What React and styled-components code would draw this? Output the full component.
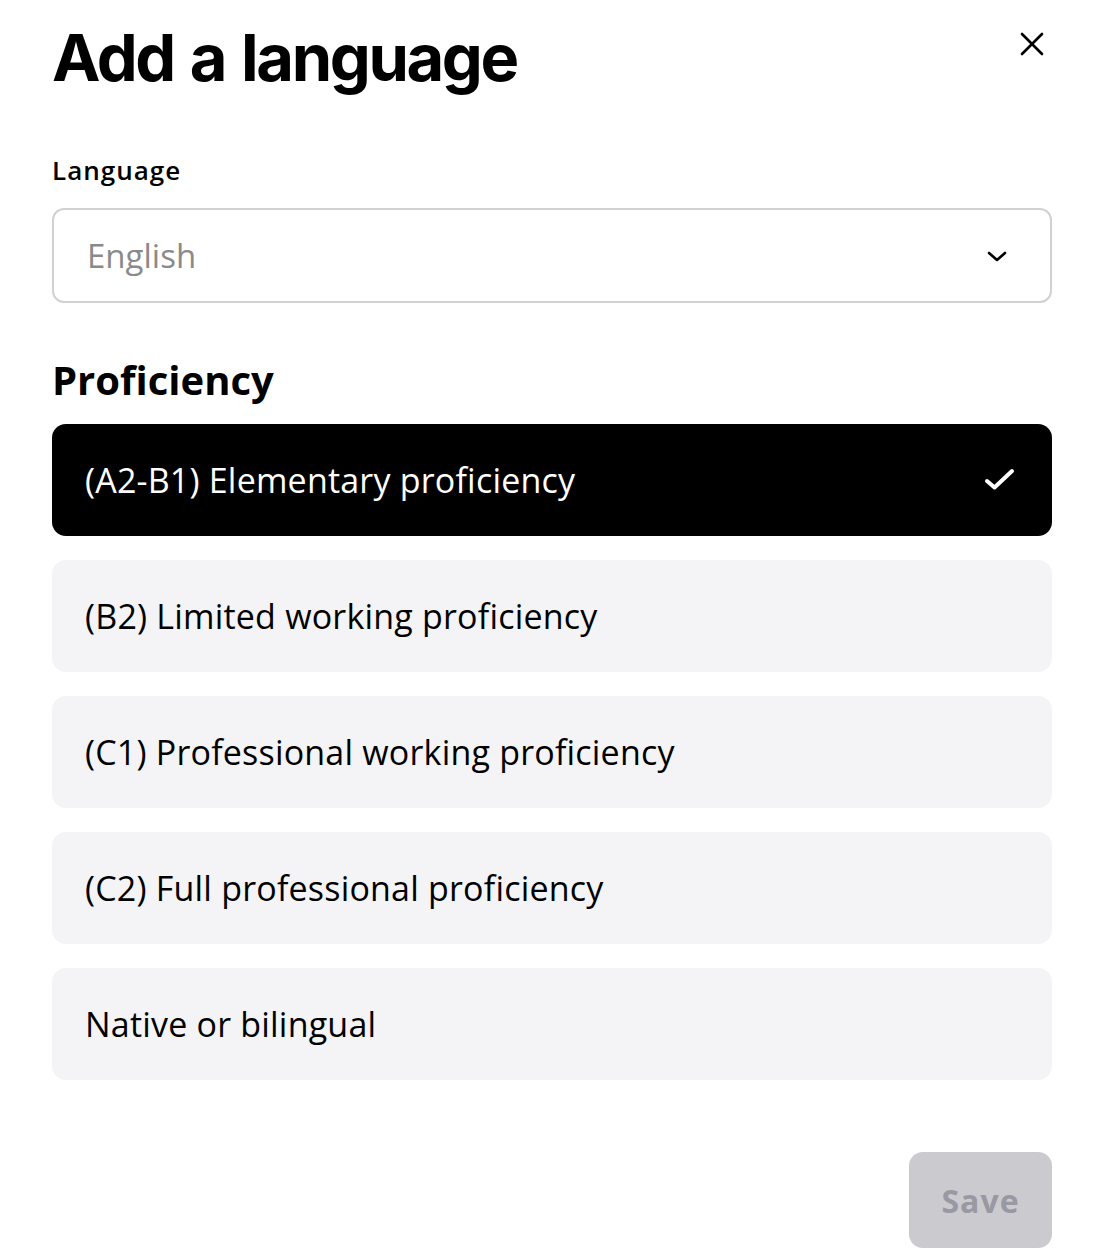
import React, { useState } from "react"
import styled, { createGlobalStyle } from "styled-components"

const GlobalStyle = createGlobalStyle`
  html, body {
    margin: 0;
    padding: 0;
    background: #ffffff;
  }
  * {
    box-sizing: border-box;
  }
`

const Modal = styled("div")`
  width: 1102px;
  height: 1250px;
  background: #fff;
  padding: 25px 50px 0 52px;
  font-family: "Open Sans", "Noto Sans", sans-serif;
  color: #000;
  display: flex;
  flex-direction: column;
`

const Header = styled("div")`
  display: flex;
  justify-content: space-between;
  align-items: flex-start;
`

const Title = styled("h1")`
  margin: 0;
  font-family: Inter, "Liberation Sans", sans-serif;
  font-weight: 700;
  font-size: 65px;
  letter-spacing: -2.4px;
  word-spacing: 3px;
  line-height: 66px;
`

const CloseButton = styled("button")`
  border: 0;
  background: none;
  padding: 0;
  margin: 4px -2px 0 0;
  width: 44px;
  height: 30px;
  display: flex;
  align-items: center;
  justify-content: center;
  cursor: pointer;
`

const Label = styled("div")`
  margin-top: 65px;
  font-size: 26px;
  font-weight: 600;
  letter-spacing: 1px;
  line-height: 28px;
`

const Select = styled("div")`
  margin-top: 24px;
  height: 95px;
  border: 2px solid #d1d0d5;
  border-radius: 12px;
  display: flex;
  align-items: center;
  justify-content: space-between;
  padding: 0 42px 0 33px;
  font-size: 33px;
  color: #8a8a8a;
`

const SectionTitle = styled("h2")`
  margin: 52px 0 0;
  font-size: 40px;
  font-weight: 700;
  line-height: 50px;
`

const Options = styled("div")`
  margin-top: 19px;
  display: flex;
  flex-direction: column;
  gap: 24px;
`

const Option = styled("div")`
  height: 112px;
  border-radius: 14px;
  display: flex;
  align-items: center;
  justify-content: space-between;
  padding: 0 35px 0 33px;
  font-size: 34px;
  letter-spacing: 0.2px;
  cursor: pointer;
  background: ${({ $active }) => ($active ? "#000" : "#f4f4f6")};
  color: ${({ $active }) => ($active ? "#fff" : "#000")};
`

const Footer = styled("div")`
  margin-top: auto;
  display: flex;
  justify-content: flex-end;
  padding-bottom: 2px;
`

const SaveButton = styled("button")`
  width: 143px;
  height: 96px;
  border: 0;
  border-radius: 14px;
  background: #cbcacf;
  color: #9a98a2;
  font-family: "Open Sans", "Noto Sans", sans-serif;
  font-size: 32px;
  font-weight: 700;
  letter-spacing: 1px;
`

const levels = [
  "(A2-B1) Elementary proficiency",
  "(B2) Limited working proficiency",
  "(C1) Professional working proficiency",
  "(C2) Full professional proficiency",
  "Native or bilingual",
]

export default function App() {
  const [active, setActive] = useState(0)
  return (
    <>
      <GlobalStyle />
      <Modal>
        <Header>
          <Title>Add a language</Title>
          <CloseButton aria-label="Close">
            <svg width="24" height="24" viewBox="0 0 24 24" fill="none" stroke="#000" strokeWidth="2.6" strokeLinecap="round">
              <path d="M2 2 L22 22 M22 2 L2 22" />
            </svg>
          </CloseButton>
        </Header>
        <Label>Language</Label>
        <Select>
          <span>English</span>
          <svg width="22" height="14" viewBox="0 0 22 14" fill="none" stroke="#000" strokeWidth="2.6" strokeLinecap="round" strokeLinejoin="round">
            <path d="M3 4 L11 11 L19 4" />
          </svg>
        </Select>
        <SectionTitle>Proficiency</SectionTitle>
        <Options>
          {levels.map((l, i) => (
            <Option key={l} $active={i === active} onClick={() => setActive(i)}>
              <span>{l}</span>
              {i === active && (
                <svg width="34" height="28" viewBox="0 0 34 28" fill="none" stroke="#fff" strokeWidth="4" strokeLinecap="round" strokeLinejoin="round">
                  <path d="M4 15 L11.5 21.5 L29 5" />
                </svg>
              )}
            </Option>
          ))}
        </Options>
        <Footer>
          <SaveButton>Save</SaveButton>
        </Footer>
      </Modal>
    </>
  )
}
